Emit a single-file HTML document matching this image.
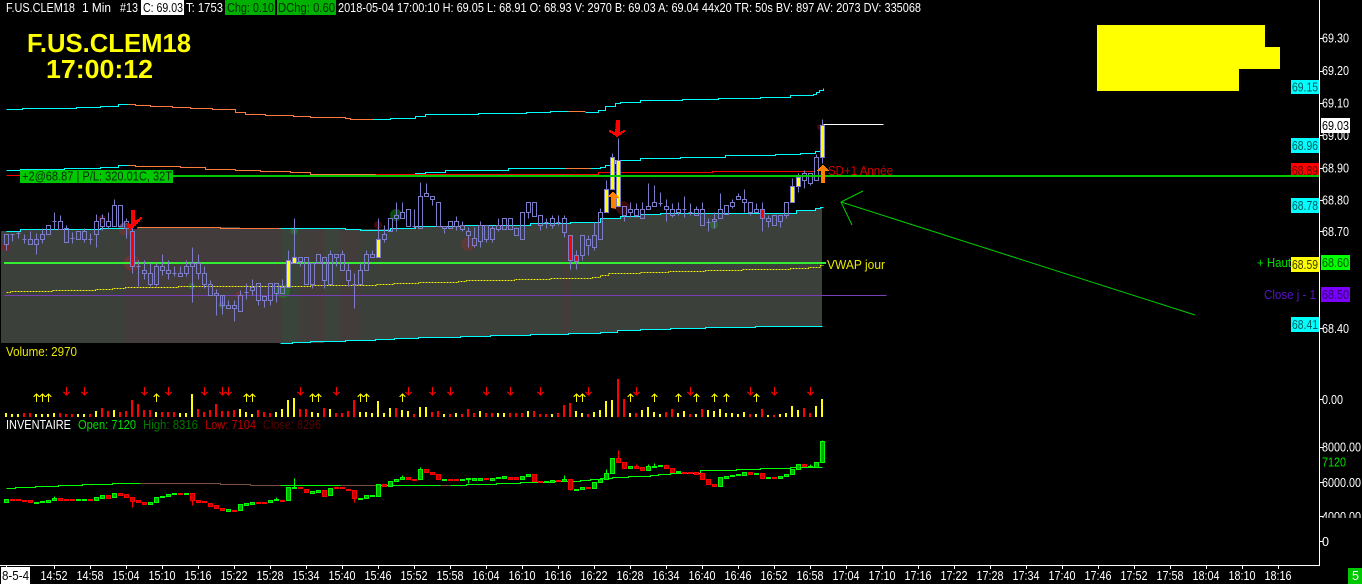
<!DOCTYPE html>
<html><head><meta charset="utf-8"><title>F.US.CLEM18</title>
<style>
html,body{margin:0;padding:0;background:#000;width:1362px;height:584px;overflow:hidden}
svg{display:block}
text{font-family:"Liberation Sans",sans-serif;font-size:12.5px;fill:#fff}
.ax{text-anchor:start}
</style></head><body>
<svg width="1362" height="584" viewBox="0 0 1362 584" xmlns="http://www.w3.org/2000/svg">
<rect width="1362" height="584" fill="#000"/>
<defs><clipPath id="c4k"><rect x="1320" y="512" width="42" height="6"/></clipPath></defs>

<!-- shaded band -->
<g shape-rendering="crispEdges">
<path fill="#3b403b" d="M1 231H20V229H137V227H240V229H390V228H415V226H460V225H530V223H570V222H600V218H620V216H640V214H660V213H730V213H796V210H815V208H822V326H755V327H705V328H670V329H640V330H617V332H600V333H568V334H530V335H490V337H418V338H394V339H375V340H345V341H310V342H292V343H1z"/>
<path fill="#433c3c" d="M126 229H282V343H126z"/>
<path fill="#3b443b" d="M282 229H300V343H282z"/>
<path fill="#413d3b" d="M300 229H318V343H300z"/>
<path fill="#463b3b" d="M318 229H324V343H318z"/>
<path fill="#3b433b" d="M324 229H340V342H324z"/>
<path fill="#423d3b" d="M340 229H360V341H340z"/>
<path fill="#463b3b" d="M564 223H570V334H564z"/>
</g>

<!-- faint circles -->
<g>
<circle cx="6" cy="247" r="4.5" fill="#6a2a2a"/>
<circle cx="102" cy="219" r="4" fill="#3c0808"/>
<circle cx="125" cy="229" r="6.5" fill="#5e3a35"/>
<circle cx="132" cy="263" r="8" fill="#6a3535"/>
<circle cx="192" cy="286" r="3.5" fill="#2f6a2f"/>
<circle cx="222" cy="305" r="3.5" fill="#2f6a2f"/>
<circle cx="239" cy="295" r="3.5" fill="#6a3535"/>
<circle cx="283" cy="291" r="7" fill="#2c6a2c"/>
<circle cx="294" cy="231" r="3.5" fill="#2f6a2f"/>
<circle cx="378" cy="225" r="4" fill="#440808"/>
<circle cx="396" cy="215" r="6" fill="#0a4a0a"/>
<circle cx="468" cy="244" r="7" fill="#5e3a35"/>
<circle cx="623" cy="208" r="7" fill="#3c0808"/>
<circle cx="714" cy="225" r="4" fill="#2f6a2f"/>
<circle cx="820" cy="127" r="3" fill="#4a0505"/>
</g>

<g shape-rendering="crispEdges" fill="none" transform="translate(.5 .5)">
<!-- upper band line -->
<path stroke="#00ffff" d="M6 109H22V108H76V107H100V106H118V104H128"/>
<path stroke="#ff7a3c" d="M128 104H135V105H150V106H172V107H190V108H212V109H235V112H245V114H265V115H293V116H310V117H345V118H350V119H373"/>
<path stroke="#00ffff" d="M373 119H390V118H415V116H425V114H478V113H526V112H550V111H568"/>
<path stroke="#ff7a3c" d="M568 111H585"/>
<path stroke="#00ffff" d="M585 112H598V110H605V106H615V103H620V102H640V100H682V99H718V98H760V97H790V95H813V94H816V92H819V90H823V88"/>
<!-- second band line -->
<path stroke="#00ffff" d="M6 170H20V169H64V168H100V167H118V165H128"/>
<path stroke="#ff7a3c" d="M128 165H135V166H180V167H205V169H235V170H260V171H290V172H310V174H350V174H388"/>
<path stroke="#00ffff" d="M388 174H415V173H425V172H445V170H508V168H565"/>
<path stroke="#ff7a3c" d="M565 168H590"/>
<path stroke="#00ffff" d="M590 168H600V167H605V165H610V163H615V160H640V158H680V157H725V155H775V154H800V153H815V151H820V149H823"/>
<!-- red line -->
<path stroke="#ff0000" d="M6 175H376V174H598V172H712V171H815"/>
<!-- band tops / bottoms -->
<path stroke="#00ffff" d="M6 231H20V229H100V228H125"/>
<path stroke="#ff7a3c" d="M137 227H220V228H280"/>
<path stroke="#00ffff" d="M280 228H345V229H360V230H390V228H415V226H460V225H530V223H570V222H600V218H620V216H640V214H660V213H730V213H796V210H815V208H820V207H823"/>
<path stroke="#00ffff" d="M280 343H292V342H310V341H345V340H375V339H394V338H418V337H460V336H490V335H530V334H568V333H600V332H617V330H640V329H670V328H705V327H755V326H822"/>
<!-- VWAP dotted -->
<path stroke="#f0f000" stroke-dasharray="2 1" d="M6 292H10V291H52V290H95V289H112V288H125V287H178V286H310V285H376V284H393V283H418V282H458V281H466V280H514V279H550V278H592V277H600V275H608V273H640V272H668V271H705V270H742V269H790V268H808V267H820V265H823"/>
<!-- purple -->
<path stroke="#7a3fb8" d="M4 295H886"/>
<!-- white last price -->
<path stroke="#fff" d="M823 124H883"/>
</g>
<rect x="4" y="262" width="822" height="2" fill="#33ee33"/>

<!-- candles -->
<g shape-rendering="crispEdges" transform="translate(.5 .5)" fill="none" stroke="#7c7cc8">
<path d="M6 244V250M4 234h4v10h-4zM12 234V241M10 234h4M18 231V238M16 233h4M24 234V243M22 239h4M30 231V239M30 244V244M28 239h4v5h-4zM36 233V239M36 244V254M34 239h4v5h-4zM42 228V234M42 239V243M40 234h4v5h-4zM46 225h4v9h-4zM54 212V229M52 221h4M60 215V221M58 221h4v8h-4zM66 225V228M64 228h4v14h-4zM72 232V243M70 238h4M76 231h4v8h-4zM84 228V231M84 239V242M82 231h4v8h-4zM90 233V244M88 239h4M96 214V221M96 234V247M94 221h4v13h-4zM102 214V218M102 226V230M100 218h4v8h-4zM108 212V221M108 226V228M106 221h4v5h-4zM114 199V205M112 205h4v21h-4zM118 205h4v21h-4zM126 218V221M126 228V238M124 221h4v7h-4z"/>
<path d="M138 260V286M136 266h4M144 260V270M144 273V279M142 270h4v3h-4zM150 263V273M150 284V286M148 273h4v11h-4zM156 263V266M156 284V286M154 266h4v18h-4zM162 254V266M162 270V275M160 266h4v4h-4zM168 260V270M168 273V279M166 270h4v3h-4zM174 266V276M172 273h4M180 266V273M178 273h4v3h-4zM186 260V266M186 273V276M184 266h4v7h-4zM192 247V263M192 266V302M190 263h4v3h-4zM198 254V263M198 273V279M196 263h4v10h-4zM204 266V273M204 284V288M202 273h4v11h-4zM210 280V284M208 284h4v11h-4zM216 289V293M216 295V315M214 293h4v2h-4zM222 295V305M222 305V314M220 295h4v10h-4zM228 300V305M228 308V308M226 305h4v3h-4zM234 300V305M234 308V321M232 305h4v3h-4zM240 290V295M238 295h4v16h-4zM246 283V299M244 292h4M252 279V287M252 290V295M250 287h4v3h-4zM258 300V305M256 283h4v17h-4zM264 300V307M262 296h4v4h-4zM270 300V305M268 283h4v17h-4zM276 293V302M274 283h4v10h-4zM282 279V287M280 287h4v6h-4z"/>
<path d="M300 261V266M298 257h4v4h-4zM304 257h4v27h-4zM312 284V288M310 263h4v21h-4zM316 254h4v9h-4zM324 280V288M322 257h4v23h-4zM330 250V254M328 254h4v30h-4zM336 257V266M334 254h4v3h-4zM342 250V254M340 254h4v16h-4zM348 263V270M348 280V286M346 270h4v10h-4zM354 273V308M352 284h4M360 263V270M358 270h4v14h-4zM366 250V254M364 254h4v16h-4zM372 250V254M370 254h4v3h-4zM384 225V234M384 239V242M382 234h4v5h-4zM388 218h4v13h-4zM396 202V215M396 218V231M394 215h4v3h-4zM402 202V212M400 212h4v6h-4zM406 209h4v17h-4zM414 209V228M412 226h4M420 182V196M418 196h4v32h-4zM426 183V193M424 193h4v3h-4zM432 199V205M430 196h4v3h-4zM436 202h4v24h-4zM444 228V233M442 226h4v2h-4zM448 221h4v7h-4zM456 216V221M456 226V230M454 221h4v5h-4zM462 221V225M462 229V231M460 225h4v4h-4zM468 227V231M468 235V247M466 231h4v4h-4zM474 227V238M474 245V247M472 238h4v7h-4zM480 221V225M480 241V247M478 225h4v16h-4zM486 239V242M484 225h4v14h-4zM492 225V228M492 239V242M490 228h4v11h-4zM498 218V225M498 229V231M496 225h4v4h-4zM502 218h4v11h-4zM508 218h4v11h-4zM516 241V241M514 228h4v7h-4zM522 212V212M520 212h4v27h-4zM528 212V218M526 202h4v10h-4zM532 202h4v14h-4zM540 225V230M538 215h4v10h-4zM546 218V228M544 222h4M552 215V218M552 225V228M550 218h4v7h-4zM558 215V225M556 222h4M564 215V218M564 232V237M562 218h4v14h-4z"/>
<path d="M582 255V260M580 235h4v20h-4zM588 235V239M588 245V255M586 239h4v6h-4zM594 222V235M594 247V250M592 235h4v12h-4zM600 208V212M598 212h4v27h-4zM624 215V221M622 206h4v9h-4zM630 202V209M630 212V217M628 209h4v3h-4zM636 203V209M636 215V217M634 209h4v6h-4zM642 202V209M640 209h4v9h-4zM648 183V206M646 206h4v3h-4zM654 185V202M652 202h4v4h-4zM660 192V206M658 203h4M666 199V206M666 209V221M664 206h4v3h-4zM672 203V209M672 215V217M670 209h4v6h-4zM678 202V209M678 212V215M676 209h4v3h-4zM684 196V217M682 209h4M690 203V215M688 212h4M696 206V209M694 209h4v6h-4zM702 202V209M700 209h4v16h-4zM708 218V231M706 222h4M714 212V219M714 221V228M712 219h4v2h-4zM720 193V209M718 209h4v9h-4zM724 205h4v9h-4zM732 199V202M732 206V208M730 202h4v4h-4zM738 193V196M736 196h4v3h-4zM744 189V199M744 202V212M742 199h4v3h-4zM750 212V215M748 202h4v10h-4zM756 203V209M754 209h4v3h-4zM768 215V218M768 221V227M766 218h4v3h-4zM772 215h4v10h-4zM780 221V227M778 215h4v6h-4zM786 215V218M784 202h4v13h-4zM804 170V173M804 180V188M802 173h4v7h-4zM810 183V185M808 173h4v10h-4zM816 154V157M814 157h4v23h-4zM822 119V125M822 157V163"/>
</g>
<!-- coloured candles -->
<g shape-rendering="crispEdges" transform="translate(.5 .5)" stroke="#7c7cc8">
<path fill="none" d="M132 226V231M132 266V273M288 250V260M294 218V257M378 218V239M570 260V269M576 250V255M576 261V269M606 180V189M612 153V157M618 138V160M762 202V209M762 218V231M792 178V186M798 173V177M798 186V192"/>
<path fill="#ffff00" d="M286 260h4v27h-4zM292 257h4v6h-4zM376 239h4v18h-4zM604 189h4v23h-4zM610 157h4v32h-4zM616 160h4v46h-4zM790 186h4v16h-4zM796 177h4v9h-4zM820 125h4v32h-4z"/>
<path fill="#ff0000" d="M130 231h4v35h-4zM568 235h4v25h-4zM574 255h4v6h-4zM760 209h4v9h-4z"/>
</g>
<!-- big arrows -->
<rect x="173" y="175" width="1145" height="2" fill="#00c800"/>
<path fill="#ff0000" shape-rendering="crispEdges" d="M131 210h4v10h2v-1h2v-1h1v-1h2v2h-1v1h-1v2h-2v2h-2v2h-2v2h-2v2h-2v-2h-2v-2h-1v-3h2v1h2z"/>
<path fill="#ff0000" shape-rendering="crispEdges" d="M616 120h4v12h1v-1h2v-1h2v2h-1v1h-2v1h-1v1h-2v1h-1v1h-2v-1h-1v-1h-2v-1h-1v-1h-2v-1h-1v-2h2v1h2v1h2z"/>
<path fill="#ff8000" shape-rendering="crispEdges" d="M611 208v-11h-3v-1h1v-1h1v-1h1v-1h1v-1h2v1h1v1h1v1h1v1h1v1h1v1h-3v11z"/>
<path fill="#ff8000" shape-rendering="crispEdges" d="M821 183v-12h-4v-1h1v-1h1v-1h1v-1h1v-1h1v-1h2v1h1v1h1v1h1v1h1v1h1v1h-4v12z"/>

<!-- green label + arrow -->
<rect x="20" y="170" width="153" height="13" fill="#00c800"/>
<text x="22" y="180.500" textLength="150" lengthAdjust="spacingAndGlyphs" style="fill:#053005">+2@68.87 | P/L: 320.01C, 32T</text>
<path fill="none" stroke="#00d000" d="M863 191L841 202L852 225M841 202L1195 315"/>

<text x="828" y="175" textLength="65" lengthAdjust="spacingAndGlyphs" style="fill:#d00000">SD+1 Année</text>
<text x="827" y="269" textLength="58" lengthAdjust="spacingAndGlyphs" style="fill:#e8e800">VWAP jour</text>

<!-- header -->
<rect x="141" y="0" width="43" height="15" fill="#fff"/>
<rect x="225" y="0" width="50" height="15" fill="#00b000"/>
<rect x="277" y="0" width="59" height="15" fill="#00b000"/>
<text x="6" y="12" textLength="69" lengthAdjust="spacingAndGlyphs">F.US.CLEM18</text>
<text x="82" y="12" textLength="29" lengthAdjust="spacingAndGlyphs">1 Min</text>
<text x="120" y="12" textLength="18" lengthAdjust="spacingAndGlyphs">#13</text>
<text x="143" y="12" textLength="40" lengthAdjust="spacingAndGlyphs" style="fill:#000">C: 69.03</text>
<text x="186" y="12" textLength="37" lengthAdjust="spacingAndGlyphs">T: 1753</text>
<text x="227" y="12" textLength="47" lengthAdjust="spacingAndGlyphs" style="fill:#002a00">Chg: 0.10</text>
<text x="278" y="12" textLength="57" lengthAdjust="spacingAndGlyphs" style="fill:#002a00">DChg: 0.60</text>
<text x="338" y="12" textLength="583" lengthAdjust="spacingAndGlyphs">2018-05-04 17:00:10 H: 69.05 L: 68.91 O: 68.93 V: 2970 B: 69.03 A: 69.04 44x20 TR: 50s BV: 897 AV: 2073 DV: 335068</text>

<!-- title -->
<text x="27" y="52" textLength="164" lengthAdjust="spacingAndGlyphs" style="font-size:26px;font-weight:bold;fill:#ffff00">F.US.CLEM18</text>
<text x="46" y="78" textLength="107" lengthAdjust="spacingAndGlyphs" style="font-size:26px;font-weight:bold;fill:#ffff00">17:00:12</text>

<!-- yellow block -->
<path fill="#ffff00" shape-rendering="crispEdges" d="M1097 25H1265V47H1280V69H1239V91H1097z"/>

<!-- axes -->
<g shape-rendering="crispEdges" fill="#fff">
<rect x="1319" y="0" width="1" height="566"/>
<rect x="0" y="565" width="1320" height="1"/>
<path stroke="#fff" d="M1320 38.500h3M1320 71.500h3M1320 103.500h3M1320 135.500h3M1320 168.500h3M1320 200.500h3M1320 231.500h3M1320 328.500h3M1320 399.500h3M1320 447.500h3M1320 482.500h3M1320 516.500h3M1320 541.500h3"/>
<path stroke="#fff" d="M54.500 566v3M90.500 566v3M126.500 566v3M162.500 566v3M198.500 566v3M234.500 566v3M270.500 566v3M306.500 566v3M342.500 566v3M378.500 566v3M414.500 566v3M450.500 566v3M486.500 566v3M522.500 566v3M558.500 566v3M594.500 566v3M630.500 566v3M666.500 566v3M702.500 566v3M738.500 566v3M774.500 566v3M810.500 566v3M846.500 566v3M882.500 566v3M918.500 566v3M954.500 566v3M990.500 566v3M1026.500 566v3M1062.500 566v3M1098.500 566v3M1134.500 566v3M1170.500 566v3M1206.500 566v3M1242.500 566v3M1278.500 566v3M6.500 566v3"/>
</g>
<g>
<text x="1322" y="42.500" textLength="27" lengthAdjust="spacingAndGlyphs">69.30</text>
<text x="1322" y="75" textLength="27" lengthAdjust="spacingAndGlyphs">69.20</text>
<text x="1322" y="107.500" textLength="27" lengthAdjust="spacingAndGlyphs">69.10</text>
<text x="1322" y="140" textLength="27" lengthAdjust="spacingAndGlyphs">69.00</text>
<text x="1322" y="172.500" textLength="27" lengthAdjust="spacingAndGlyphs">68.90</text>
<text x="1322" y="204.500" textLength="27" lengthAdjust="spacingAndGlyphs">68.80</text>
<text x="1322" y="236" textLength="27" lengthAdjust="spacingAndGlyphs">68.70</text>
<text x="1322" y="333" textLength="27" lengthAdjust="spacingAndGlyphs">68.40</text>
<text x="1322" y="404" textLength="21" lengthAdjust="spacingAndGlyphs">0.00</text>
<text x="1322" y="451.500" textLength="39" lengthAdjust="spacingAndGlyphs">8000.00</text>
<text x="1322" y="466.500" textLength="24" lengthAdjust="spacingAndGlyphs" style="fill:#00e000">7120</text>
<text x="1322" y="487" textLength="39" lengthAdjust="spacingAndGlyphs">6000.00</text>
<text x="1322" y="521" textLength="39" lengthAdjust="spacingAndGlyphs" clip-path="url(#c4k)">4000.00</text>
<text x="1322" y="546" textLength="7" lengthAdjust="spacingAndGlyphs">0</text>
</g>
<!-- price tags -->
<g shape-rendering="crispEdges">
<rect x="1291" y="80" width="28" height="14" fill="#00ffff"/>
<rect x="1291" y="138" width="28" height="15" fill="#00ffff"/>
<rect x="1291" y="163" width="28" height="14" fill="#ff0000"/>
<rect x="1291" y="198" width="28" height="15" fill="#00ffff"/>
<rect x="1291" y="257" width="28" height="15" fill="#ffff00"/>
<rect x="1291" y="317" width="28" height="15" fill="#00ffff"/>
<rect x="1321" y="118" width="29" height="15" fill="#fff"/>
<rect x="1321" y="255" width="29" height="15" fill="#00ff00"/>
<rect x="1321" y="287" width="29" height="15" fill="#7a00ff"/>
</g>
<rect x="1291" y="175" width="28" height="2" fill="#00c800"/>
<g>
<text x="1292" y="91.500" textLength="26" lengthAdjust="spacingAndGlyphs" style="fill:#005a5a">69.15</text>
<text x="1292" y="150" textLength="26" lengthAdjust="spacingAndGlyphs" style="fill:#005a5a">68.96</text>
<text x="1292" y="175" textLength="26" lengthAdjust="spacingAndGlyphs" style="fill:#600000">68.89</text>
<text x="1292" y="210" textLength="26" lengthAdjust="spacingAndGlyphs" style="fill:#005a5a">68.78</text>
<text x="1292" y="269" textLength="26" lengthAdjust="spacingAndGlyphs" style="fill:#3a3a00">68.59</text>
<text x="1292" y="329" textLength="26" lengthAdjust="spacingAndGlyphs" style="fill:#005a5a">68.41</text>
<text x="1322" y="130" textLength="27" lengthAdjust="spacingAndGlyphs" style="fill:#000">69.03</text>
<text x="1322" y="267" textLength="27" lengthAdjust="spacingAndGlyphs" style="fill:#005000">68.60</text>
<text x="1322" y="299" textLength="27" lengthAdjust="spacingAndGlyphs" style="fill:#30006a">68.50</text>
<text x="1257" y="267" textLength="34" lengthAdjust="spacingAndGlyphs" style="fill:#00e000">+ Haut</text>
<text x="1264" y="299" textLength="52" lengthAdjust="spacingAndGlyphs" style="fill:#5a14c8">Close j - 1</text>
</g>

<!-- volume -->
<text x="6" y="356" textLength="71" lengthAdjust="spacingAndGlyphs" style="fill:#e8e800">Volume: 2970</text>
<g shape-rendering="crispEdges" stroke-width="2" fill="none">
<path stroke="#ffff00" d="M6 417v-4M12 417v-3M18 417v-3M36 417v-3M42 417v-3M48 417v-3M54 417v-4M78 417v-3M84 417v-3M96 417v-6M114 417v-7M156 417v-5M180 417v-4M186 417v-4M192 417v-23M240 417v-8M246 417v-5M252 417v-3M276 417v-5M282 417v-8M288 417v-17M294 417v-19M312 417v-5M318 417v-4M330 417v-8M360 417v-5M366 417v-5M372 417v-4M378 417v-16M384 417v-4M390 417v-9M402 417v-7M408 417v-6M420 417v-10M426 417v-10M444 417v-3M456 417v-4M480 417v-6M498 417v-4M504 417v-4M528 417v-6M552 417v-3M576 417v-6M582 417v-4M594 417v-5M600 417v-7M606 417v-16M612 417v-17M630 417v-4M642 417v-7M648 417v-10M654 417v-5M660 417v-3M678 417v-4M684 417v-6M696 417v-3M708 417v-7M714 417v-6M720 417v-8M726 417v-4M732 417v-4M738 417v-3M744 417v-5M756 417v-3M768 417v-2M780 417v-3M786 417v-4M792 417v-11M798 417v-7M816 417v-11M822 417v-18"/>
<path stroke="#ff0000" d="M24 417v-4M30 417v-4M60 417v-4M66 417v-3M72 417v-3M90 417v-3M102 417v-9M108 417v-6M120 417v-5M126 417v-6M132 417v-17M138 417v-13M144 417v-7M150 417v-7M162 417v-5M168 417v-5M174 417v-5M198 417v-8M204 417v-5M210 417v-7M216 417v-13M222 417v-6M228 417v-6M234 417v-7M258 417v-7M264 417v-5M270 417v-4M300 417v-8M306 417v-8M324 417v-9M336 417v-4M342 417v-4M348 417v-6M354 417v-17M396 417v-9M414 417v-3M432 417v-5M438 417v-6M450 417v-3M462 417v-3M468 417v-8M474 417v-4M486 417v-4M492 417v-4M510 417v-4M516 417v-4M522 417v-4M534 417v-6M540 417v-3M546 417v-3M558 417v-4M564 417v-12M570 417v-14M588 417v-3M618 417v-38M624 417v-18M636 417v-4M666 417v-5M672 417v-8M690 417v-3M702 417v-8M750 417v-3M762 417v-8M774 417v-2M804 417v-9M810 417v-4"/>
</g>
<g fill="none" shape-rendering="crispEdges" transform="translate(.5 0)">
<path stroke="#ff0000" d="M66 387v8m-3-3l3 3l3-3M84 387v8m-3-3l3 3l3-3M144 387v8m-3-3l3 3l3-3M168 387v8m-3-3l3 3l3-3M204 387v8m-3-3l3 3l3-3M222 387v8m-3-3l3 3l3-3M228 387v8m-3-3l3 3l3-3M300 387v8m-3-3l3 3l3-3M336 387v8m-3-3l3 3l3-3M408 387v8m-3-3l3 3l3-3M432 387v8m-3-3l3 3l3-3M450 387v8m-3-3l3 3l3-3M486 387v8m-3-3l3 3l3-3M510 387v8m-3-3l3 3l3-3M540 387v8m-3-3l3 3l3-3M588 387v8m-3-3l3 3l3-3M636 387v8m-3-3l3 3l3-3M690 387v8m-3-3l3 3l3-3M750 387v8m-3-3l3 3l3-3M774 387v8m-3-3l3 3l3-3M810 387v8m-3-3l3 3l3-3"/>
<path stroke="#ffff00" d="M36 402v-8m-3 3l3-3l3 3M42 402v-8m-3 3l3-3l3 3M48 402v-8m-3 3l3-3l3 3M156 402v-8m-3 3l3-3l3 3M246 402v-8m-3 3l3-3l3 3M252 402v-8m-3 3l3-3l3 3M312 402v-8m-3 3l3-3l3 3M318 402v-8m-3 3l3-3l3 3M360 402v-8m-3 3l3-3l3 3M366 402v-8m-3 3l3-3l3 3M402 402v-8m-3 3l3-3l3 3M576 402v-8m-3 3l3-3l3 3M582 402v-8m-3 3l3-3l3 3M630 402v-8m-3 3l3-3l3 3M654 402v-8m-3 3l3-3l3 3M678 402v-8m-3 3l3-3l3 3M696 402v-8m-3 3l3-3l3 3M714 402v-8m-3 3l3-3l3 3M726 402v-8m-3 3l3-3l3 3M756 402v-8m-3 3l3-3l3 3"/>
</g>

<!-- inventory -->
<text x="6" y="429" textLength="65" lengthAdjust="spacingAndGlyphs">INVENTAIRE</text>
<text x="78" y="429" textLength="58" lengthAdjust="spacingAndGlyphs" style="fill:#00e000">Open: 7120</text>
<text x="143" y="429" textLength="55" lengthAdjust="spacingAndGlyphs" style="fill:#007800">High: 8316</text>
<text x="205" y="429" textLength="51" lengthAdjust="spacingAndGlyphs" style="fill:#b80000">Low: 7104</text>
<text x="263" y="429" textLength="58" lengthAdjust="spacingAndGlyphs" style="fill:#5a0000">Close: 8296</text>

<g shape-rendering="crispEdges" fill="none" transform="translate(.5 .5)">
<path stroke="#00ff00" d="M6 488H15V487H35V486H58V485H82V484H112V483H140"/>
<path stroke="#7a5040" d="M140 483H187V483H220V484H250V485H280"/>
<path stroke="#00ff00" d="M280 485H340"/>
<path stroke="#7a5040" d="M340 485H380"/>
<path stroke="#00ff00" d="M380 485H440"/>
<path stroke="#7a5040" d="M440 485H450"/>
<path stroke="#00ff00" d="M450 485H466V484H496V483H520V482H550V481H580V480H590V479H600V478H612V477H628V476H650V475H658V474H670V473H700V470H736V469H760V468H790V467H822"/>
<path fill="#00a800" stroke="#00ff00" d="M4 499h4v3h-4zM34 502h4v1h-4zM40 501h4v1h-4zM46 500h4v2h-4zM52 498h4v2h-4zM76 499h4v1h-4zM82 499h4v1h-4zM94 497h4v3h-4zM100 495h4v3h-4zM112 493h4v4h-4zM148 502h4v2h-4zM154 497h4v5h-4zM160 496h4v1h-4zM166 494h4v2h-4zM172 493h4v1h-4zM184 493h4v1h-4zM226 509h4v2h-4zM238 504h4v6h-4zM244 503h4v2h-4zM250 502h4v2h-4zM268 500h4v2h-4zM274 499h4v1h-4zM286 487h4v13h-4zM292 487h4v1h-4zM310 491h4v2h-4zM316 490h4v2h-4zM328 488h4v7h-4zM358 498h4v1h-4zM364 495h4v3h-4zM370 495h4v1h-4zM376 484h4v12h-4zM388 481h4v5h-4zM394 479h4v2h-4zM400 477h4v2h-4zM418 469h4v10h-4zM442 479h4v1h-4zM460 479h4v1h-4zM466 478h4v1h-4zM472 478h4v2h-4zM478 478h4v2h-4zM490 478h4v2h-4zM496 477h4v1h-4zM502 476h4v2h-4zM520 476h4v3h-4zM526 474h4v2h-4zM544 481h4v1h-4zM550 480h4v2h-4zM562 479h4v2h-4zM574 489h4v1h-4zM580 487h4v2h-4zM592 482h4v6h-4zM598 479h4v3h-4zM604 473h4v6h-4zM610 458h4v15h-4zM628 466h4v2h-4zM646 466h4v4h-4zM652 466h4v1h-4zM658 465h4v1h-4zM676 471h4v1h-4zM718 477h4v9h-4zM724 476h4v2h-4zM730 475h4v1h-4zM736 474h4v1h-4zM742 472h4v3h-4zM754 473h4v1h-4zM766 477h4v1h-4zM778 476h4v2h-4zM784 474h4v2h-4zM790 469h4v5h-4zM796 464h4v5h-4zM808 466h4v1h-4zM814 462h4v5h-4zM820 441h4v21h-4z"/>
<path stroke="#00ff00" d="M294 478V487M468 478V483M606 469V473M648 464V466M654 463V466M810 464V466M564 475V479M54 496V498M276 497V499M402 475V477M420 467V469M822 440V441"/>
<path fill="#c00000" stroke="#ff0000" d="M10 499h4v1h-4zM16 499h4v1h-4zM22 500h4v1h-4zM28 500h4v2h-4zM58 498h4v2h-4zM64 499h4v1h-4zM70 499h4v1h-4zM88 499h4v1h-4zM106 495h4v3h-4zM118 493h4v2h-4zM124 494h4v3h-4zM130 497h4v4h-4zM136 500h4v2h-4zM142 502h4v2h-4zM178 493h4v1h-4zM190 493h4v7h-4zM196 500h4v2h-4zM202 501h4v1h-4zM208 503h4v3h-4zM214 505h4v3h-4zM220 508h4v2h-4zM232 510h4v1h-4zM256 502h4v1h-4zM262 502h4v1h-4zM280 500h4v1h-4zM298 487h4v1h-4zM304 489h4v3h-4zM322 490h4v6h-4zM334 487h4v1h-4zM340 487h4v1h-4zM346 489h4v1h-4zM352 490h4v8h-4zM382 484h4v2h-4zM406 477h4v2h-4zM412 479h4v1h-4zM424 469h4v3h-4zM430 472h4v2h-4zM436 474h4v5h-4zM448 479h4v1h-4zM454 479h4v1h-4zM484 478h4v1h-4zM508 477h4v2h-4zM514 477h4v2h-4zM532 474h4v7h-4zM538 481h4v1h-4zM556 480h4v1h-4zM568 479h4v10h-4zM586 487h4v1h-4zM616 458h4v4h-4zM622 462h4v6h-4zM634 466h4v2h-4zM640 467h4v3h-4zM664 465h4v3h-4zM670 468h4v4h-4zM682 472h4v1h-4zM688 472h4v1h-4zM694 472h4v2h-4zM700 473h4v6h-4zM706 479h4v5h-4zM712 484h4v2h-4zM748 472h4v2h-4zM760 473h4v5h-4zM772 477h4v1h-4zM802 464h4v2h-4z"/>
<path stroke="#ff0000" d="M132 501V507M192 500V505M354 498V502M618 450V458M570 489V490M636 464V466"/>
</g>

<!-- time axis -->
<rect x="1" y="567" width="29" height="17" fill="#fff"/>
<text x="2" y="580" textLength="27" lengthAdjust="spacingAndGlyphs" style="fill:#000">8-5-4</text>
<g text-anchor="middle">
<text x="54" y="580" textLength="27" lengthAdjust="spacingAndGlyphs">14:52</text>
<text x="90" y="580" textLength="27" lengthAdjust="spacingAndGlyphs">14:58</text>
<text x="126" y="580" textLength="27" lengthAdjust="spacingAndGlyphs">15:04</text>
<text x="162" y="580" textLength="27" lengthAdjust="spacingAndGlyphs">15:10</text>
<text x="198" y="580" textLength="27" lengthAdjust="spacingAndGlyphs">15:16</text>
<text x="234" y="580" textLength="27" lengthAdjust="spacingAndGlyphs">15:22</text>
<text x="270" y="580" textLength="27" lengthAdjust="spacingAndGlyphs">15:28</text>
<text x="306" y="580" textLength="27" lengthAdjust="spacingAndGlyphs">15:34</text>
<text x="342" y="580" textLength="27" lengthAdjust="spacingAndGlyphs">15:40</text>
<text x="378" y="580" textLength="27" lengthAdjust="spacingAndGlyphs">15:46</text>
<text x="414" y="580" textLength="27" lengthAdjust="spacingAndGlyphs">15:52</text>
<text x="450" y="580" textLength="27" lengthAdjust="spacingAndGlyphs">15:58</text>
<text x="486" y="580" textLength="27" lengthAdjust="spacingAndGlyphs">16:04</text>
<text x="522" y="580" textLength="27" lengthAdjust="spacingAndGlyphs">16:10</text>
<text x="558" y="580" textLength="27" lengthAdjust="spacingAndGlyphs">16:16</text>
<text x="594" y="580" textLength="27" lengthAdjust="spacingAndGlyphs">16:22</text>
<text x="630" y="580" textLength="27" lengthAdjust="spacingAndGlyphs">16:28</text>
<text x="666" y="580" textLength="27" lengthAdjust="spacingAndGlyphs">16:34</text>
<text x="702" y="580" textLength="27" lengthAdjust="spacingAndGlyphs">16:40</text>
<text x="738" y="580" textLength="27" lengthAdjust="spacingAndGlyphs">16:46</text>
<text x="774" y="580" textLength="27" lengthAdjust="spacingAndGlyphs">16:52</text>
<text x="810" y="580" textLength="27" lengthAdjust="spacingAndGlyphs">16:58</text>
<text x="846" y="580" textLength="27" lengthAdjust="spacingAndGlyphs">17:04</text>
<text x="882" y="580" textLength="27" lengthAdjust="spacingAndGlyphs">17:10</text>
<text x="918" y="580" textLength="27" lengthAdjust="spacingAndGlyphs">17:16</text>
<text x="954" y="580" textLength="27" lengthAdjust="spacingAndGlyphs">17:22</text>
<text x="990" y="580" textLength="27" lengthAdjust="spacingAndGlyphs">17:28</text>
<text x="1026" y="580" textLength="27" lengthAdjust="spacingAndGlyphs">17:34</text>
<text x="1062" y="580" textLength="27" lengthAdjust="spacingAndGlyphs">17:40</text>
<text x="1098" y="580" textLength="27" lengthAdjust="spacingAndGlyphs">17:46</text>
<text x="1134" y="580" textLength="27" lengthAdjust="spacingAndGlyphs">17:52</text>
<text x="1170" y="580" textLength="27" lengthAdjust="spacingAndGlyphs">17:58</text>
<text x="1206" y="580" textLength="27" lengthAdjust="spacingAndGlyphs">18:04</text>
<text x="1242" y="580" textLength="27" lengthAdjust="spacingAndGlyphs">18:10</text>
<text x="1278" y="580" textLength="27" lengthAdjust="spacingAndGlyphs">18:16</text>
</g>
<rect x="1348" y="568" width="14" height="16" fill="#00c800"/>
<text x="1352" y="580" textLength="7" lengthAdjust="spacingAndGlyphs">5</text>
</svg>
</body></html>
